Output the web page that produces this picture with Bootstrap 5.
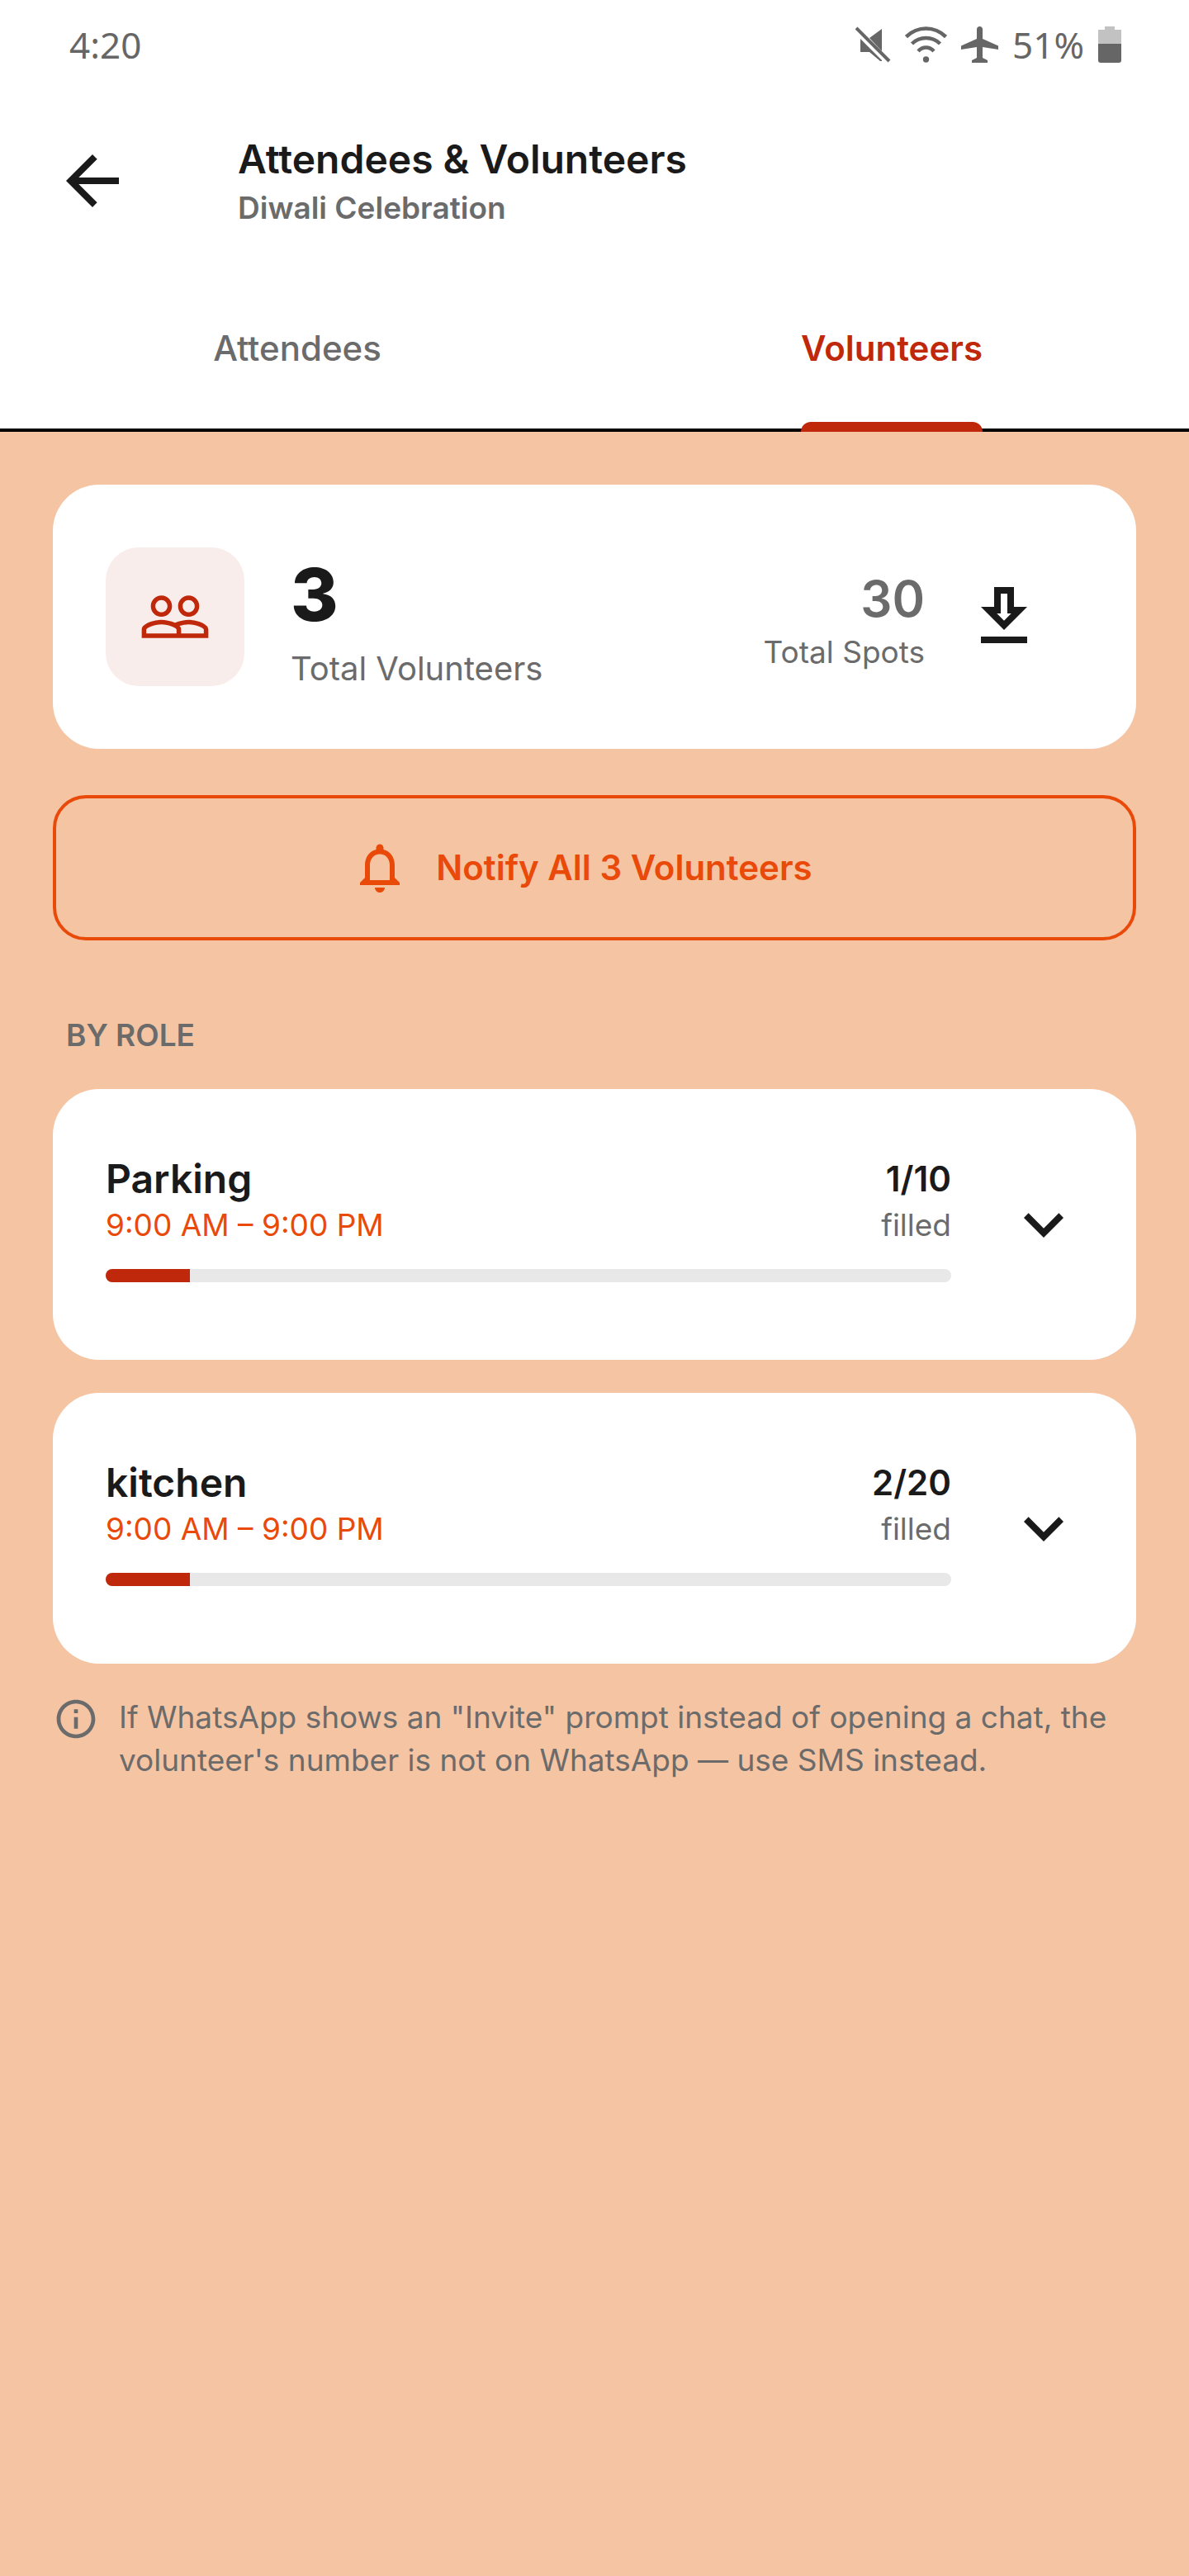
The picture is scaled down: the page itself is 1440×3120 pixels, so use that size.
<!DOCTYPE html>
<html lang="en">
<head>
<meta charset="utf-8">
<meta name="viewport" content="width=device-width, initial-scale=1">
<title>Attendees &amp; Volunteers</title>
<link href="https://cdn.jsdelivr.net/npm/bootstrap@5.3.0/dist/css/bootstrap.min.css" rel="stylesheet">
<style>
  :root { --ink: #1a1a1a; --muted: #6b6b6b; --brand: #bf280b; --accent: #e94a0a; --sand: #f5c4a3; }
  body { background: var(--sand); color: var(--ink); font-family: Inter, "Open Sans", sans-serif; font-size: 37px; line-height: 52px; }
  svg { display: block; flex: none; fill: currentColor; }
  .muted { color: var(--muted); }
  .accent { color: var(--accent); }
  .semi { font-weight: 600; }
  .status-bar { height: 108px; padding: 0 82px 0 84px; color: #666; font-family: "Noto Sans", sans-serif; font-size: 44px; }
  .status-icons { gap: 17px; }
  .app-bar { height: 222px; padding: 0 64px; gap: 128px; }
  .app-title { font-size: 48px; line-height: 66px; }
  .tab-row { border-bottom: 4px solid #000; }
  .tab-row .nav-link { position: relative; padding: 64px 0 69px; font-size: 42px; line-height: 56px; font-weight: 500; color: var(--muted); }
  .tab-row .nav-link.active { color: var(--brand); font-weight: 600; }
  .tab-row .nav-link.active::after { content: ""; position: absolute; left: 0; right: 0; bottom: -4px; height: 12px; border-radius: 12px 12px 0 0; background: var(--brand); }
  .page-body { padding: 64px; }
  .panel { border: 0; border-radius: 56px; padding: 64px; color: var(--ink); }
  .panel-summary { height: 320px; }
  .people-tile { width: 168px; height: 168px; border-radius: 40px; background: #f9edeb; color: var(--brand); margin-right: 56px; }
  .big-count { font-size: 88px; line-height: 126px; font-weight: 800; }
  .big-label { font-size: 40px; line-height: 54px; }
  .spot-count { font-size: 60px; line-height: 86px; }
  .spot-label { line-height: 44px; }
  .icon-btn { border: 0; padding: 0; background: none; color: var(--ink); }
  .download-btn { width: 192px; }
  .notify-btn { margin-top: 56px; height: 176px; padding: 0 40px 0 8px; gap: 32px; border: 4px solid var(--accent); border-radius: 40px; color: var(--accent); font-size: 42px; line-height: 56px; }
  .notify-btn:hover { background: var(--accent); border-color: var(--accent); color: #fff; }
  .role-heading { margin: 89px 16px 39px; font-size: 37px; line-height: 52px; }
  .role-list { gap: 40px; }
  .role-panel { gap: 64px; }
  .role-info { padding: 16px 0 30px; }
  .role-name { font-size: 48px; line-height: 58px; }
  .role-count { font-size: 42px; line-height: 58px; }
  .role-sub { line-height: 54px; }
  .role-progress { height: 16px; margin-top: 26px; border-radius: 8px; background: #e8e8e8; }
  .role-progress .progress-bar { background: var(--brand); }
  .hint { margin-top: 39px; gap: 24px; }
</style>
</head>
<body>
<header class="bg-white">
  <div class="status-bar d-flex align-items-center justify-content-between">
    <span>4:20</span>
    <div class="status-icons d-flex align-items-center">
      <svg width="43" height="44" viewBox="0 0 43 44" aria-hidden="true"><path d="M32 3v27L17 14zM6 15l26 26v1h-2L17 31H6z"/><path d="M1 2l40 40" stroke="currentColor" stroke-width="4"/></svg>
      <svg width="51" height="44" viewBox="0 0 51 44" aria-hidden="true"><g fill="none" stroke="currentColor" stroke-width="4.500"><path d="M1.500 12.500Q12 2.500 25.500 2.500T49.500 12.500"/><path d="M8.500 21Q15.500 14 25.500 14T42.500 21"/><path d="M16 30Q20 25.500 25.500 25.500T35 30"/></g><circle cx="25.500" cy="40" r="3.700"/></svg>
      <svg width="45" height="44" viewBox="0 0 45 44" aria-hidden="true"><path d="M22.500 0c2 0 3.500 1.500 3.500 3.500V15l19 8.500V28l-19-3v13l6 3v3H13v-3l6-3V25L0 28v-4.500L19 15V3.500C19 1.500 20.500 0 22.500 0z"/></svg>
      <span>51%</span>
      <svg width="28" height="44" viewBox="0 0 28 44" aria-hidden="true"><path d="M0 4h8V0h12v4h8v17H0z" fill="#c2c2c2"/><path d="M0 21h28v20q0 3-3 3H3q-3 0-3-3z"/></svg>
    </div>
  </div>
  <div class="app-bar d-flex align-items-center">
    <button class="icon-btn" type="button" aria-label="Back"><svg width="96" height="96" viewBox="0 0 24 24"><path d="M20 11H7.830l5.590-5.590L12 4l-8 8 8 8 1.410-1.410L7.830 13H20z"/></svg></button>
    <div>
      <h1 class="app-title semi mb-0">Attendees &amp; Volunteers</h1>
      <div class="muted semi">Diwali Celebration</div>
    </div>
  </div>
  <nav class="tab-row nav">
    <div class="nav-item w-50 d-flex justify-content-center"><a class="nav-link" href="#attendees">Attendees</a></div>
    <div class="nav-item w-50 d-flex justify-content-center"><a class="nav-link active" href="#volunteers" aria-current="page">Volunteers</a></div>
  </nav>
</header>

<main class="page-body" id="volunteers">
  <section class="card panel panel-summary flex-row align-items-center">
    <div class="people-tile d-flex align-items-center justify-content-center flex-shrink-0">
      <svg width="88" height="88" viewBox="0 0 24 24" aria-hidden="true"><path d="M16.500 13c-1.200 0-3.070.340-4.500 1-1.430-.670-3.300-1-4.500-1C5.330 13 1 14.080 1 16.250V19h22v-2.750c0-2.170-4.330-3.250-6.500-3.250zm-4 4.500h-10v-1.250c0-.540 2.560-1.750 5-1.750s5 1.210 5 1.750v1.250zm9 0H14v-1.250c0-.460-.200-.860-.520-1.220.880-.300 1.960-.530 3.020-.530 2.440 0 5 1.210 5 1.750v1.250zM7.500 12c1.930 0 3.500-1.570 3.500-3.500S9.430 5 7.500 5 4 6.570 4 8.500 5.570 12 7.500 12zm0-5.500c1.100 0 2 .900 2 2s-.900 2-2 2-2-.900-2-2 .900-2 2-2zm9 5.500c1.930 0 3.500-1.570 3.500-3.500S18.430 5 16.500 5 13 6.570 13 8.500s1.570 3.500 3.500 3.500zm0-5.500c1.100 0 2 .900 2 2s-.900 2-2 2-2-.900-2-2 .900-2 2-2z"/></svg>
    </div>
    <div class="flex-grow-1">
      <div class="big-count">3</div>
      <div class="big-label muted">Total Volunteers</div>
    </div>
    <div class="text-end muted">
      <div class="spot-count semi">30</div>
      <div class="spot-label">Total Spots</div>
    </div>
    <button class="icon-btn download-btn d-flex justify-content-center" type="button" aria-label="Download"><svg width="96" height="96" viewBox="0 0 24 24"><path d="M19 9h-4V3H9v6H5l7 7 7-7zm-8 2V5h2v6h1.170L12 13.170 9.830 11H11zm-6 7h14v2H5z"/></svg></button>
  </section>

  <button class="notify-btn btn w-100 semi d-flex align-items-center justify-content-center" type="button">
    <svg width="72" height="72" viewBox="0 0 24 24" aria-hidden="true"><path d="M12 22c1.100 0 2-.900 2-2h-4c0 1.100.890 2 2 2zm6-6v-5c0-3.070-1.640-5.640-4.500-6.320V4c0-.830-.670-1.500-1.500-1.500s-1.500.670-1.500 1.500v.680C7.630 5.360 6 7.920 6 11v5l-2 2v1h16v-1l-2-2zm-2 1H8v-6c0-2.480 1.510-4.500 4-4.500s4 2.020 4 4.500v6z"/></svg>
    <span>Notify All 3 Volunteers</span>
  </button>

  <h2 class="role-heading muted semi">BY ROLE</h2>

  <div class="role-list d-flex flex-column">
    <section class="card panel role-panel flex-row align-items-center">
      <div class="role-info flex-grow-1">
        <div class="d-flex justify-content-between">
          <div>
            <h3 class="role-name semi mb-0">Parking</h3>
            <div class="role-sub accent">9:00 AM – 9:00 PM</div>
          </div>
          <div class="text-end">
            <div class="role-count semi">1/10</div>
            <div class="role-sub muted">filled</div>
          </div>
        </div>
        <div class="progress role-progress" role="progressbar" aria-label="Parking spots filled" aria-valuenow="10" aria-valuemin="0" aria-valuemax="100"><div class="progress-bar" style="width: 10%"></div></div>
      </div>
      <button class="icon-btn" type="button" aria-label="Show Parking volunteers"><svg width="96" height="96" viewBox="0 0 24 24"><path d="M16.590 8.590L12 13.170 7.410 8.590 6 10l6 6 6-6z"/></svg></button>
    </section>
    <section class="card panel role-panel flex-row align-items-center">
      <div class="role-info flex-grow-1">
        <div class="d-flex justify-content-between">
          <div>
            <h3 class="role-name semi mb-0">kitchen</h3>
            <div class="role-sub accent">9:00 AM – 9:00 PM</div>
          </div>
          <div class="text-end">
            <div class="role-count semi">2/20</div>
            <div class="role-sub muted">filled</div>
          </div>
        </div>
        <div class="progress role-progress" role="progressbar" aria-label="kitchen spots filled" aria-valuenow="10" aria-valuemin="0" aria-valuemax="100"><div class="progress-bar" style="width: 10%"></div></div>
      </div>
      <button class="icon-btn" type="button" aria-label="Show kitchen volunteers"><svg width="96" height="96" viewBox="0 0 24 24"><path d="M16.590 8.590L12 13.170 7.410 8.590 6 10l6 6 6-6z"/></svg></button>
    </section>
  </div>

  <div class="hint d-flex muted">
    <svg width="56" height="56" viewBox="0 0 24 24" aria-hidden="true"><path d="M11 7h2v2h-2zm0 4h2v6h-2zm1-9C6.480 2 2 6.480 2 12s4.480 10 10 10 10-4.480 10-10S17.520 2 12 2zm0 18c-4.410 0-8-3.590-8-8s3.590-8 8-8 8 3.590 8 8-3.590 8-8 8z"/></svg>
    <p class="mb-0">If WhatsApp shows an "Invite" prompt instead of opening a chat, the volunteer's number is not on WhatsApp — use SMS instead.</p>
  </div>
</main>
<script src="https://cdn.jsdelivr.net/npm/bootstrap@5.3.0/dist/js/bootstrap.bundle.min.js"></script>
</body>
</html>
